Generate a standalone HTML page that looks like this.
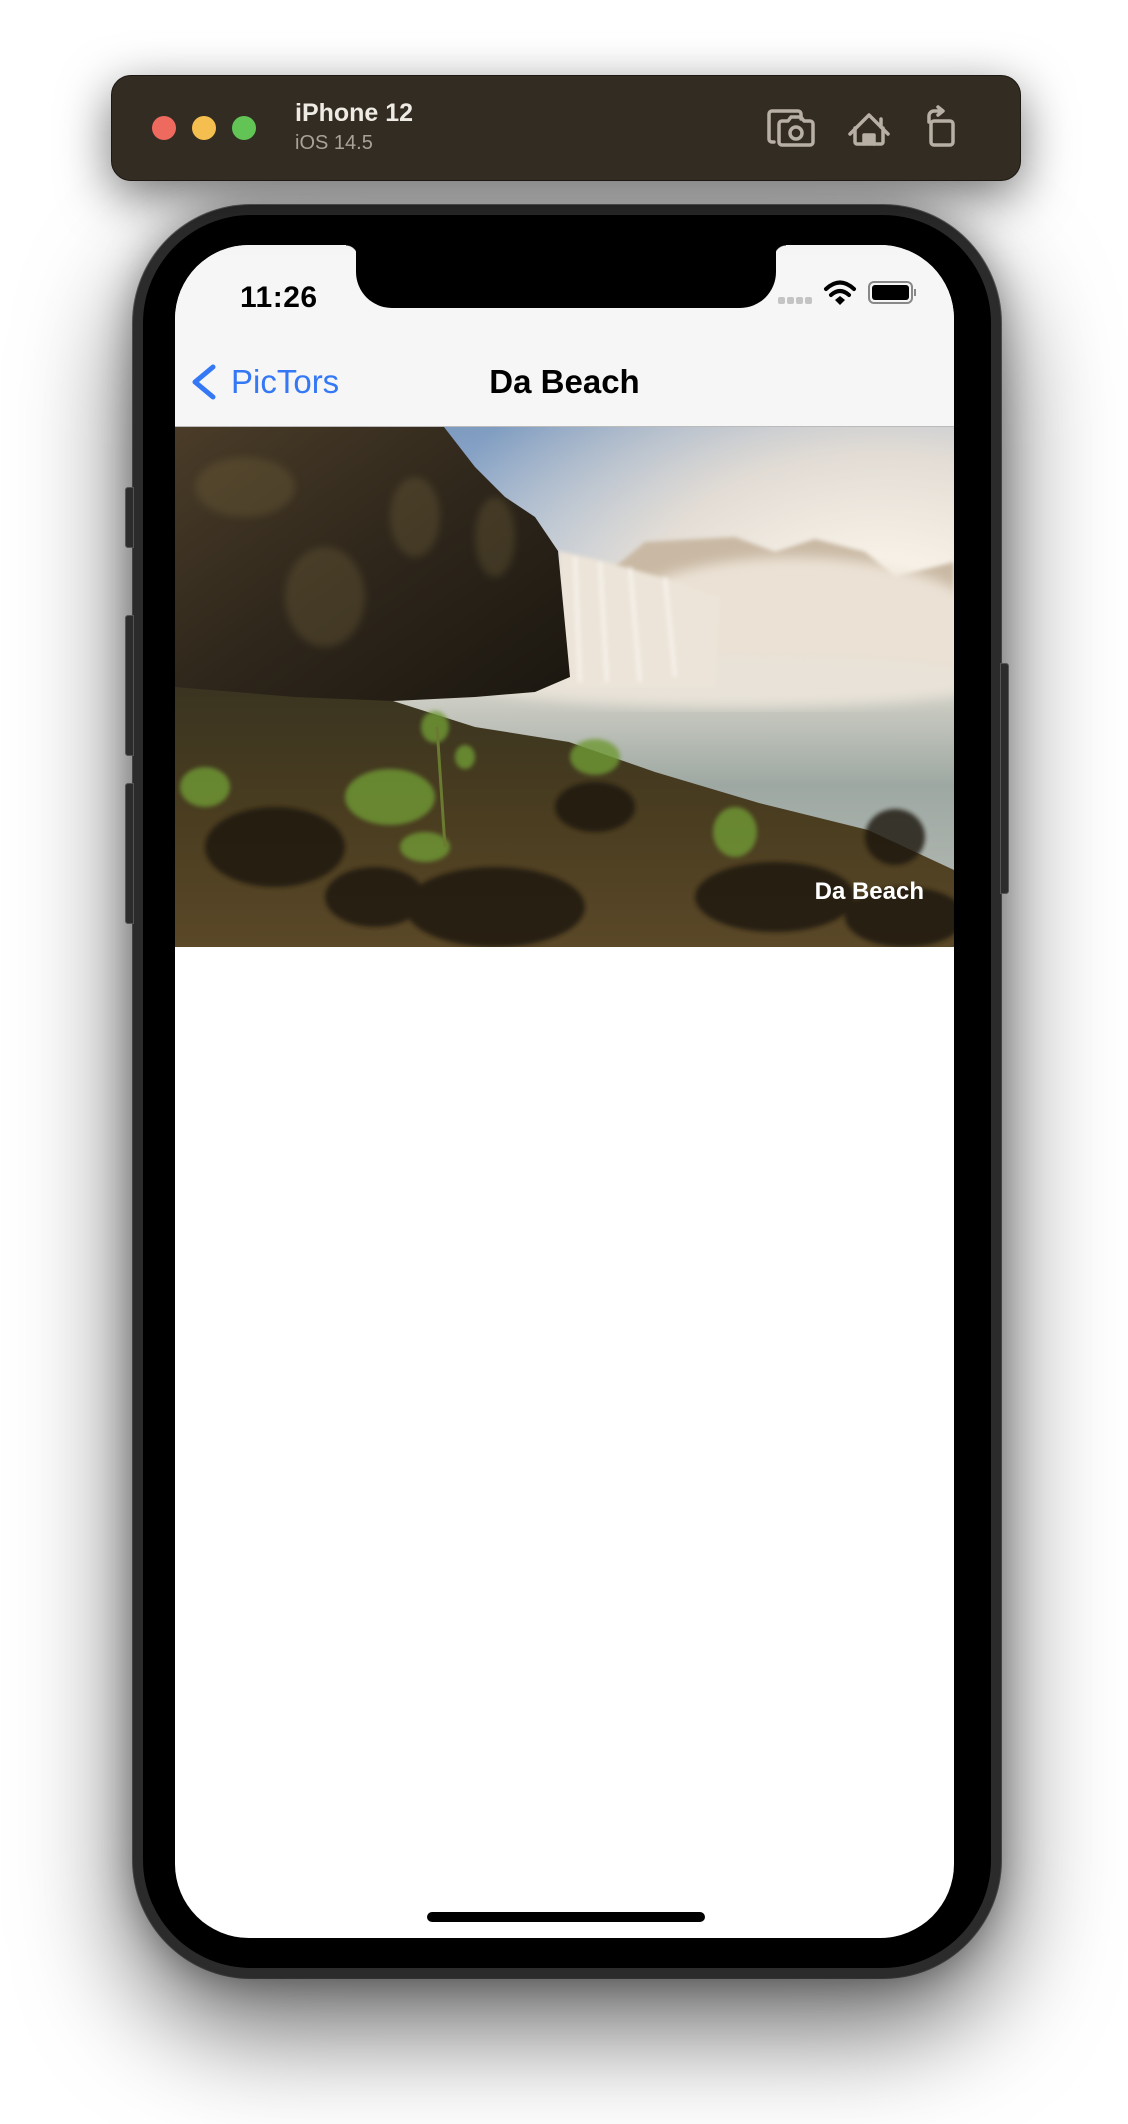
<!DOCTYPE html>
<html><head><meta charset="utf-8"><style>
*{margin:0;padding:0;box-sizing:border-box}
body{width:1128px;height:2124px;background:#fff;position:relative;overflow:hidden;font-family:"Liberation Sans",sans-serif}
.abs{position:absolute}
.tb{left:111px;top:75px;width:910px;height:106px;background:#332c23;border-radius:20px;box-shadow:0 15px 50px rgba(0,0,0,.55);border:1px solid #1c1812}
.dot{width:24px;height:24px;border-radius:50%;top:116px}
.phone{left:133px;top:205px;width:868px;height:1773px;border-radius:118px;background:#2b2b2b;box-shadow:0 50px 110px rgba(0,0,0,.6),0 0 40px rgba(0,0,0,.35),0 0 0 1px #777;}
.bez{left:143px;top:215px;width:848px;height:1753px;border-radius:108px;background:#000}
.screen{left:175px;top:245px;width:779px;height:1693px;border-radius:74px;background:#fff;overflow:hidden}
.btn{background:#2c2c2c;border-radius:3px 0 0 3px;width:9px;left:125px;border:1px solid #555}
</style></head><body>
<div class="abs phone"></div>
<div class="abs btn" style="top:487px;height:61px"></div>
<div class="abs btn" style="top:615px;height:141px"></div>
<div class="abs btn" style="top:783px;height:141px"></div>
<div class="abs" style="left:1000px;top:663px;width:9px;height:231px;background:#2c2c2c;border-radius:0 3px 3px 0;border:1px solid #555"></div>
<div class="abs bez"></div>
<div class="abs screen">
  <div class="abs" style="left:0;top:0;width:779px;height:182px;background:#f6f6f6"></div>
  <div class="abs" style="left:65px;top:36px;font-size:30px;font-weight:bold;color:#000;letter-spacing:0.5px">11:26</div>
  <svg class="abs" style="left:0;top:0" width="779" height="182">
    <g fill="#c4c4c4"><rect x="603" y="52" width="7" height="7" rx="2"/><rect x="612" y="52" width="7" height="7" rx="2"/><rect x="621" y="52" width="7" height="7" rx="2"/><rect x="630" y="52" width="7" height="7" rx="2"/></g>
    <g fill="none" stroke="#000" stroke-width="4" stroke-linecap="round"><path d="M651 44 Q665 31 679 44"/><path d="M656 50 Q665 42 674 50"/></g>
    <path d="M660 55 L665 51 L670 55 L665 60Z" fill="#000"/>
    <rect x="694" y="37" width="43" height="21" rx="5" fill="none" stroke="#888" stroke-width="2"/>
    <rect x="697" y="40" width="37" height="15" rx="3" fill="#000"/>
    <path d="M740 44 v7" stroke="#888" stroke-width="2"/>
    <path d="M38 122 L20 137 L38 152" fill="none" stroke="#3478f6" stroke-width="5" stroke-linecap="round" stroke-linejoin="round"/>
  </svg>
  <div class="abs" style="left:56px;top:118px;font-size:33px;color:#3478f6">PicTors</div>
  <div class="abs" style="left:0;width:779px;top:118px;text-align:center;font-size:33px;font-weight:bold;color:#000">Da Beach</div>
  <div class="abs" style="left:0;top:181px;width:779px;height:1px;background:#bbb"></div>
  <svg class="abs" style="left:0;top:182px" width="779" height="520" viewBox="0 0 779 520">
    <defs>
      <linearGradient id="sky" x1="0" y1="0" x2="0.3" y2="1"><stop offset="0" stop-color="#6f8fb8"/><stop offset=".5" stop-color="#b9cbe0"/><stop offset="1" stop-color="#f4ede4"/></linearGradient>
      <radialGradient id="sun" cx="0.9" cy="0.35" r="0.6"><stop offset="0" stop-color="#fffaf0"/><stop offset=".5" stop-color="#f3e6d6" stop-opacity=".8"/><stop offset="1" stop-color="#f3e6d6" stop-opacity="0"/></radialGradient>
      <linearGradient id="water" x1="0" y1="0" x2="0" y2="1"><stop offset="0" stop-color="#d8d6cc"/><stop offset=".4" stop-color="#9ea8a2"/><stop offset="1" stop-color="#b9bdb8"/></linearGradient>
      <linearGradient id="cliff" x1="0" y1="0" x2="1" y2="1"><stop offset="0" stop-color="#4a3c28"/><stop offset=".5" stop-color="#2e261b"/><stop offset="1" stop-color="#1a160f"/></linearGradient>
      <linearGradient id="ground" x1="0" y1="0" x2="0" y2="1"><stop offset="0" stop-color="#3a3420"/><stop offset=".5" stop-color="#4a3d20"/><stop offset="1" stop-color="#5a4828"/></linearGradient>
      <filter id="b"><feGaussianBlur stdDeviation="6"/></filter>
      <filter id="b2"><feGaussianBlur stdDeviation="2"/></filter>
      <filter id="b3"><feGaussianBlur stdDeviation="4"/></filter>
    </defs>
    <rect width="779" height="520" fill="url(#sky)"/>
    <rect width="779" height="520" fill="url(#sun)"/>
    <path d="M440 140 L470 115 L560 110 L600 125 L640 112 L690 125 L720 150 L779 135 L779 260 L440 260Z" fill="#c9b9a4" filter="url(#b2)"/>
    <ellipse cx="620" cy="210" rx="200" ry="80" fill="#efe6da" filter="url(#b)" opacity=".9"/>
    <rect x="0" y="250" width="779" height="270" fill="url(#water)"/>
    <ellipse cx="560" cy="255" rx="260" ry="25" fill="#e8e2d8" filter="url(#b)"/>
    <path d="M383 124 Q460 140 546 170 L540 260 L390 260Z" fill="#ece4d8" filter="url(#b2)"/>
    <g stroke="#fff" stroke-width="4" opacity=".5" filter="url(#b2)"><path d="M400 130 L405 255"/><path d="M425 135 L432 255"/><path d="M455 140 L465 255"/><path d="M490 150 L500 250"/></g>
    <path d="M0 0 L269 0 L300 40 L330 70 L360 90 L383 124 L395 250 L360 265 L300 270 L218 274 L0 280Z" fill="url(#cliff)"/>
    <g opacity=".3" fill="#7a6a40" filter="url(#b3)"><ellipse cx="70" cy="60" rx="50" ry="30"/><ellipse cx="150" cy="170" rx="40" ry="50"/><ellipse cx="240" cy="90" rx="25" ry="40"/><ellipse cx="320" cy="110" rx="20" ry="40"/></g>
    <path d="M0 260 L120 270 L218 274 L300 300 L394 315 L480 345 L584 376 L693 403 L779 443 L779 520 L0 520Z" fill="url(#ground)"/>
    <g fill="#1e1810" opacity=".8" filter="url(#b2)"><ellipse cx="100" cy="420" rx="70" ry="40"/><ellipse cx="320" cy="480" rx="90" ry="40"/><ellipse cx="600" cy="470" rx="80" ry="35"/><ellipse cx="730" cy="490" rx="60" ry="30"/><ellipse cx="420" cy="380" rx="40" ry="25"/><ellipse cx="720" cy="410" rx="30" ry="28"/><ellipse cx="200" cy="470" rx="50" ry="30"/></g>
    <g fill="#6f9a35" opacity=".8" filter="url(#b2)"><ellipse cx="260" cy="300" rx="14" ry="16"/><ellipse cx="290" cy="330" rx="10" ry="12"/><ellipse cx="215" cy="370" rx="45" ry="28"/><ellipse cx="420" cy="330" rx="25" ry="18"/><ellipse cx="560" cy="405" rx="22" ry="25"/><ellipse cx="30" cy="360" rx="25" ry="20"/><ellipse cx="250" cy="420" rx="25" ry="15"/></g>
    <path d="M262 300 L270 420" stroke="#6a7a30" stroke-width="3"/>
    <text x="749" y="472" text-anchor="end" font-family="Liberation Sans,sans-serif" font-weight="bold" font-size="24" fill="#fff">Da Beach</text>
  </svg>
  <div class="abs" style="left:252px;top:1667px;width:278px;height:10px;border-radius:5px;background:#000"></div>
</div>
<div class="abs" style="left:356px;top:240px;width:420px;height:68px;background:#000;border-radius:0 0 36px 36px"></div>
<div class="abs" style="left:346px;top:245px;width:12px;height:12px;background:radial-gradient(circle at 0 100%,transparent 11px,#000 12px)"></div>
<div class="abs" style="left:774px;top:245px;width:12px;height:12px;background:radial-gradient(circle at 100% 100%,transparent 11px,#000 12px)"></div>

<div class="abs tb"></div>
<div class="abs dot" style="left:152px;background:#ee6a5f"></div>
<div class="abs dot" style="left:192px;background:#f5bf4f"></div>
<div class="abs dot" style="left:232px;background:#61c454"></div>
<div class="abs" style="left:295px;top:99px;font-size:25px;font-weight:bold;color:#eeeae4">iPhone 12</div>
<div class="abs" style="left:295px;top:132px;font-size:20px;color:#a9a298">iOS 14.5</div>
<svg class="abs" style="left:760px;top:100px" width="210" height="55" fill="none" stroke="#b8b0a5" stroke-width="3.5" stroke-linecap="round" stroke-linejoin="round">
  <path d="M14 42 H12 a3 3 0 0 1-3-3 V14 a3 3 0 0 1 3-3 H38 a3 3 0 0 1 3 3 V19"/>
  <path d="M19 24 a3 3 0 0 1 3-3 h6 l3-4 h10 l3 4 h6 a3 3 0 0 1 3 3 v18 a3 3 0 0 1-3 3 H22 a3 3 0 0 1-3-3Z"/>
  <circle cx="36" cy="33" r="6"/>
  <path d="M95 28 V42 a2 2 0 0 0 2 2 H121 a2 2 0 0 0 2-2 V28"/><path d="M90 34 L109 15 L128 34"/><path d="M104 44 V35 H114 V44" fill="#b8b0a5"/><path d="M121 19 V27"/>
  <rect x="171" y="21" width="22" height="24" rx="3"/><path d="M169 22 V16 a5 5 0 0 1 5-5 H180"/><path d="M178 7 L183 11 L178 15" fill="#b8b0a5"/>
</svg>
</body></html>
